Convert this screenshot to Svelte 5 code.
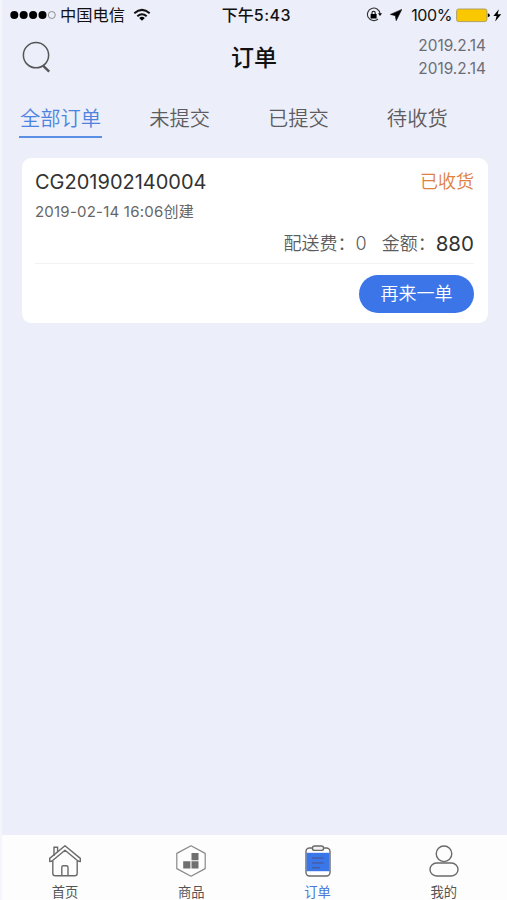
<script lang="ts">
  interface Order {
    code: string;
    created: string;
    status: string;
    freight: number;
    amount: number;
  }

  const TABS = ['全部订单', '未提交', '已提交', '待收货'];
  const NAVS = [
    { key: 'home', label: '首页' },
    { key: 'goods', label: '商品' },
    { key: 'order', label: '订单' },
    { key: 'mine', label: '我的' }
  ];

  let activeTab = $state('全部订单');
  let activeNav = $state('order');
  let startDate = $state('2019.2.14');
  let endDate = $state('2019.2.14');

  let orders = $state<Order[]>([
    { code: 'CG201902140004', created: '2019-02-14 16:06', status: '已收货', freight: 0, amount: 880 }
  ]);
</script>

<div class="page">
  <!-- 状态栏 -->
  <div class="statusbar">
    <div class="carrier">
      <svg class="signal" width="46" height="10" viewBox="0 0 46 10">
        {#each [0, 1, 2, 3] as i}
          <circle cx={4.3 + i * 9.4} cy="5" r="4" />
        {/each}
        <circle cx="41.8" cy="5" r="3.5" fill="none" stroke="#777" stroke-width="0.8" />
      </svg>
      <span class="carrier-name">中国电信</span>
      <svg class="wifi" width="18" height="14" viewBox="0 0 18 14">
        <path d="M1.3 5.2Q9-1.4 16.7 5.2M4.3 8.2Q9 4.4 13.7 8.2" fill="none" stroke="#111" stroke-width="2" />
        <path d="M6.2 10Q9 7.6 11.8 10L9 12.8Z" />
      </svg>
    </div>
    <span class="time">下午<b>5:43</b></span>
    <div class="battery">
      <svg width="16" height="16" viewBox="0 0 16 16">
        <path d="M12 12A6.3 6.3 0 1 1 14 6.5" fill="none" stroke="#333" stroke-width="1.1" />
        <path d="M12 6.3h4l-2 2.8z" />
        <rect x="4.6" y="7" width="6" height="4.6" rx="0.5" />
        <path d="M6 7.2V5.8a1.6 1.6 0 0 1 3.2 0v1.4" fill="none" stroke="#111" stroke-width="1.1" />
      </svg>
      <svg class="locate" width="12" height="12" viewBox="0 0 12 12">
        <path d="M11.8 0.4L0.3 5.4l5 1.3 0.9 5z" stroke="#111" stroke-width="0.6" />
      </svg>
      <span class="percent">100%</span>
      <svg width="47" height="15" viewBox="0 0 47 15">
        <rect x="0.6" y="1" width="30.3" height="12.6" rx="2" fill="#fac800" stroke="#a89a62" stroke-width="0.9" />
        <path d="M31.8 5.3q2 0.4 2 2t-2 2z" />
        <path d="M42.8 1.2L37.4 8.1h3.2l-1.4 5.4L45.2 6.3h-3.5z" />
      </svg>
    </div>
  </div>

  <!-- 标题 -->
  <header class="header">
    <button class="search" aria-label="搜索">
      <svg width="30" height="34" viewBox="0 0 30 34" fill="none" stroke="#555">
        <circle cx="14" cy="15.2" r="12.6" stroke-width="1.5" />
        <path d="M21 25.6L27.2 31.6" stroke-width="2.4" />
      </svg>
    </button>
    <h1 class="title">订单</h1>
    <div class="dates">
      <span>{startDate}</span>
      <span>{endDate}</span>
    </div>
  </header>

  <nav class="tabs">
    {#each TABS as tab}
      <button class="tab" class:active={activeTab === tab} onclick={() => activeTab = tab}>{tab}</button>
    {/each}
  </nav>

  <!-- 订单列表 -->
  <main class="list">
    {#each orders as order (order.code)}
      <section class="card">
        <div class="card-head">
          <span class="code">{order.code}</span>
          <span class="state">{order.status}</span>
        </div>
        <p class="created">{order.created}创建</p>
        <div class="fees">
          <span class="freight">配送费：{order.freight}</span>
          <span>金额：</span>
          <span class="amount">{order.amount}</span>
        </div>
        <div class="actions">
          <button class="again">再来一单</button>
        </div>
      </section>
    {/each}
  </main>

  <!-- 底部导航 -->
  <footer class="navbar">
    {#each NAVS as nav}
      <button class="nav" class:active={activeNav === nav.key} onclick={() => activeNav = nav.key}>
        <svg width="34" height="34" viewBox="0 0 34 34" fill="none" stroke="#6a6a6a" stroke-width="1.4">
          {#if nav.key === 'home'}
            <path d="M6 12V3.2h3.6v5" />
            <path d="M17 1.8L1.7 14.4v3.2L4 17 17 6.2 30 17l2.3.6v-3.2z" stroke-linejoin="round" />
            <path d="M4.8 17v12.2q0 2.6 2.6 2.6h19.2q2.6 0 2.6-2.6V17" />
            <path d="M13.8 31.8v-8.6q0-1.5 1.5-1.5h3.2q1.5 0 1.5 1.5v8.6" />
          {:else if nav.key === 'goods'}
            <path d="M17 1.8L31.2 9.4V24.6L17 32.2 2.8 24.6V9.4z" stroke="#888" stroke-width="1.2" stroke-linejoin="round" />
            <path d="M17.5 9h7v7.2h-7zM9.2 17.2h7.2v7.2H9.2zM17.5 17.2h7v7.2h-7z" fill="#707070" stroke="none" />
          {:else if nav.key === 'order'}
            <rect x="5" y="4" width="24" height="28" rx="3.5" fill="#fff" />
            <rect x="5.6" y="8.8" width="22.8" height="18.4" fill="#3976ea" stroke="none" />
            <path d="M11 14h11.5M11 19h11.5M11 23.8h8" stroke="#465da5" />
            <rect x="11.5" y="2" width="11" height="4.4" rx="2" fill="#f1f1f1" />
          {:else}
            <circle cx="17" cy="9.8" r="7.8" />
            <rect x="3" y="19" width="28" height="13" rx="6.5" />
          {/if}
        </svg>
        <span>{nav.label}</span>
      </button>
    {/each}
  </footer>
</div>

<style>
  :global(body) { margin: 0; }

  button {
    border: none; background: none; padding: 0; margin: 0;
    font-family: inherit; color: inherit; cursor: pointer; white-space: nowrap;
  }
  svg { display: block; flex-shrink: 0; }

  .page {
    height: 900px; box-sizing: border-box;
    display: flex; flex-direction: column; overflow: hidden;
    background: #eceef9;
    border-left: 2px solid #f5f6fc;
    font-family: 'Inter', 'Noto Sans CJK SC', sans-serif;
    color: #555;
  }

  /* 状态栏 */
  .statusbar {
    height: 30px; flex-shrink: 0; padding: 0 4px 0 8px;
    display: grid; grid-template-columns: 1fr auto 1fr; align-items: center;
    font-size: 16px; line-height: 30px; color: #111;
  }
  .carrier { display: flex; align-items: center; }
  .carrier-name { margin-left: 4px; font-size: 16.3px; }
  .wifi { margin-left: 8px; }
  .time { font-weight: 500; }
  .time b { font-weight: 500; letter-spacing: 0.5px; }
  .battery { display: flex; align-items: center; justify-content: flex-end; }
  .locate { margin: 0 9px 0 8px; }
  .percent { margin-right: 4px; font-size: 16px; letter-spacing: -0.4px; }

  /* 标题 */
  .header {
    height: 60px; flex-shrink: 0; padding: 0 21px 0 20px;
    display: grid; grid-template-columns: 1fr auto 1fr; align-items: center;
  }
  .search { justify-self: start; margin-top: -6px; }
  .title { margin: 0 0 4px; font-size: 23px; font-weight: 500; line-height: 34px; color: #111; }
  .dates {
    justify-self: end; margin-top: -6px;
    display: flex; flex-direction: column;
    font-size: 15.4px; line-height: 23px; color: #6b6d75;
  }

  .tabs { height: 68px; flex-shrink: 0; display: flex; align-items: flex-start; padding: 10px 0 0 17px; box-sizing: border-box; }
  .tab {
    flex-shrink: 0; height: 38px; margin-right: 58px;
    font-size: 20.3px; line-height: 37px; color: #5c5c60; font-weight: 350;
    border-bottom: 2px solid transparent; box-sizing: border-box;
  }
  .tab.active { color: #4d82df; border-bottom-color: #5a8fe6; padding: 0 1px; margin-right: 47px; }

  /* 订单卡片 */
  .list { flex: 1; padding: 0 19px 0 20px; }
  .card {
    height: 165px; box-sizing: border-box; padding: 9px 14px 0 13px;
    background: #fff; border-radius: 9px;
  }
  .card-head { display: flex; justify-content: space-between; line-height: 30px; }
  .code { font-size: 20px; color: #333; }
  .state { font-size: 18px; font-weight: 350; color: #df8040; }
  .created { margin: 3px 0 0; font-size: 15px; line-height: 24px; letter-spacing: 0.22px; color: #666; }
  .fees {
    height: 39px; display: flex; justify-content: flex-end; align-items: center;
    border-bottom: 1px solid #f2f2f2; padding-top: 1px; box-sizing: border-box; min-height: 40px;
    font-size: 18px; font-weight: 350; line-height: 36px; color: #5c5c5c;
  }
  .freight { margin-right: 15px; }
  .amount { font-size: 20.5px; font-weight: 400; color: #333; }
  .actions { display: flex; justify-content: flex-end; padding-top: 11px; }
  .again {
    width: 115px; height: 38px; border-radius: 19px;
    background: #3b75e8; color: #fff; font-size: 18px; font-weight: 350; line-height: 38px;
  }

  /* 底部导航 */
  .navbar { height: 65px; flex-shrink: 0; display: flex; background: #fdfdfd; }
  .nav {
    flex: 1; display: flex; flex-direction: column; align-items: center; padding-top: 9px;
    font-size: 13.3px; line-height: 20px; color: #555;
  }
  .nav span { margin-top: 4px; }
  .nav.active { color: #4678d6; }
</style>
